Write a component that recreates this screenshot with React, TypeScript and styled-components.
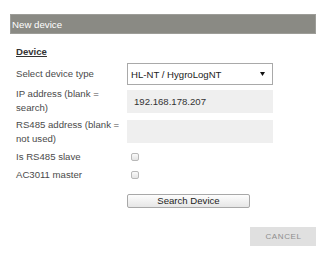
import React from "react";
import styled, { createGlobalStyle } from "styled-components";

const Global = createGlobalStyle`
  html, body { margin: 0; padding: 0; background: #fff; }
  body { font-family: "Liberation Sans", Arial, sans-serif; }
  * { box-sizing: border-box; }
`;

const Page = styled.div`
  width: 327px;
  height: 255px;
  padding: 14px 11px 0 10px;
  font-family: "Liberation Sans", Arial, sans-serif;
  font-size: 9.6px;
  color: #444;
`;

const Header = styled.div`
  height: 20px;
  background: #8a8a84;
  border: 1px solid #9d9d98;
  color: #fff;
  display: flex;
  align-items: center;
  padding-left: 1px;
  font-size: 9.7px;
`;

const Body = styled.div`
  padding-left: 6px;
`;

const SectionTitle = styled.div`
  margin-top: 12px;
  height: 12px;
  line-height: 12px;
  font-weight: bold;
  font-size: 9.6px;
  color: #333;
  text-decoration: underline;
`;

const Form = styled.div`
  margin-top: 3px;
  display: grid;
  grid-template-columns: 111px 146px;
  grid-template-rows: 26px 28px 33px 18px 18px auto;
  align-items: center;
`;

const Label = styled.div`
  line-height: 14px;
  color: #4a4a4a;
`;

const SelectBox = styled.div`
  height: 22px;
  border: 1px solid #a9a9a9;
  background: #fff;
  display: flex;
  align-items: center;
  justify-content: space-between;
  padding: 0 7px 0 3px;
  color: #222;
`;

const Arrow = styled.svg`
  width: 5px;
  height: 4px;
  display: block;
`;

const TextInput = styled.div`
  height: 23px;
  background: #efefef;
  display: flex;
  align-items: center;
  padding-left: 7px;
  color: #333;
`;

const Check = styled.span`
  display: block;
  width: 8px;
  height: 8px;
  margin-left: 4px;
  border: 1px solid #b8b8b8;
  border-radius: 2px;
  background: linear-gradient(#fafafa, #e4e4e4);
`;

const SearchButton = styled.button`
  margin-top: 10px;
  width: 123px;
  height: 14px;
  padding: 0;
  border: 1px solid #a8a8a8;
  border-radius: 2px;
  background: linear-gradient(#fdfdfd, #e6e6e6);
  font-family: "Liberation Sans", Arial, sans-serif;
  font-size: 9.6px;
  color: #222;
  line-height: 12px;
`;

const Footer = styled.div`
  margin-top: 19px;
  display: flex;
  justify-content: flex-end;
`;

const CancelButton = styled.button`
  width: 66px;
  height: 19px;
  padding: 0 0 0 1px;
  border: none;
  background: #e0e0e0;
  color: #8e8e8e;
  font-family: "Liberation Sans", Arial, sans-serif;
  font-size: 8px;
  letter-spacing: 0.6px;
  text-transform: uppercase;
`;

export default function App() {
  return (
    <>
      <Global />
      <Page>
        <Header>New device</Header>
        <Body>
          <SectionTitle>Device</SectionTitle>
          <Form>
            <Label>Select device type</Label>
            <SelectBox>
              <span>HL-NT / HygroLogNT</span>
              <Arrow viewBox="0 0 5 4">
                <path d="M0 0 H5 L2.5 4 Z" fill="#111" />
              </Arrow>
            </SelectBox>

            <Label>
              IP address (blank =<br />
              search)
            </Label>
            <TextInput>192.168.178.207</TextInput>

            <Label>
              RS485 address (blank =<br />
              not used)
            </Label>
            <TextInput />

            <Label>Is RS485 slave</Label>
            <div>
              <Check />
            </div>

            <Label>AC3011 master</Label>
            <div>
              <Check />
            </div>

            <div />
            <div>
              <SearchButton>Search Device</SearchButton>
            </div>
          </Form>
          <Footer>
            <CancelButton>Cancel</CancelButton>
          </Footer>
        </Body>
      </Page>
    </>
  );
}
